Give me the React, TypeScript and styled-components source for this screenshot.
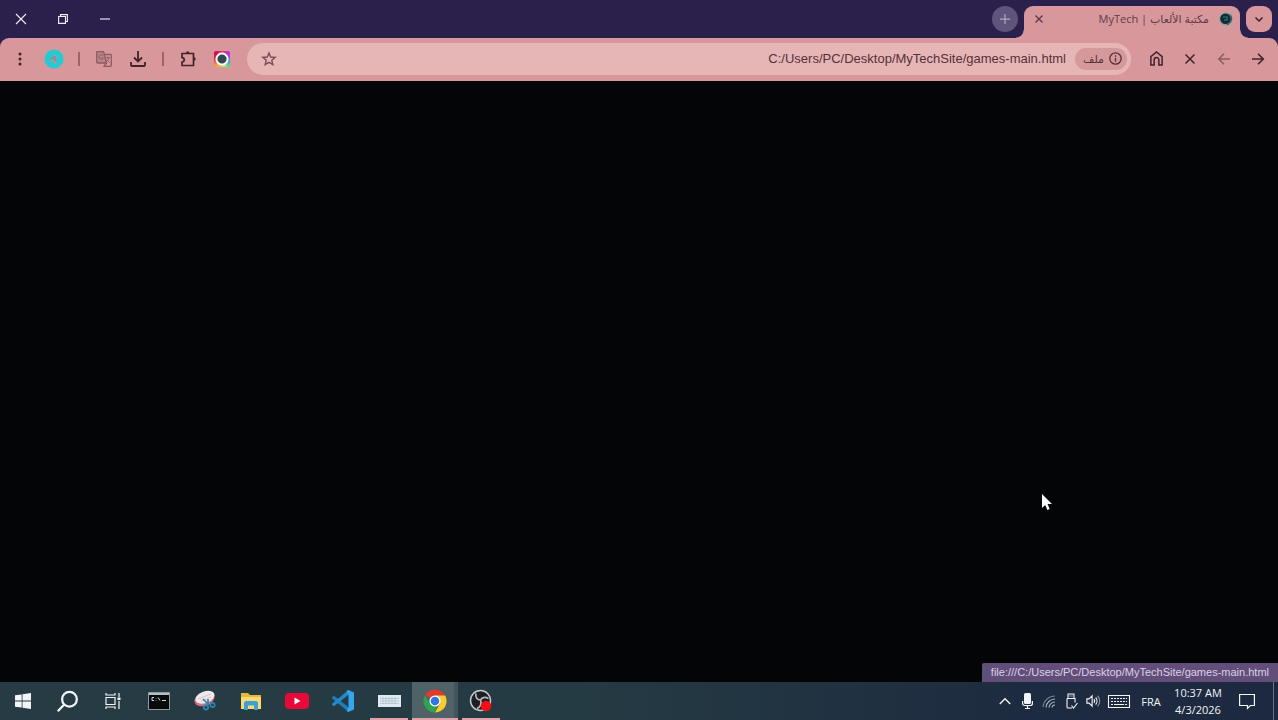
import React from "react";
import styled, { createGlobalStyle } from "styled-components";

const GlobalStyle = createGlobalStyle`
  *, *::before, *::after { box-sizing: border-box; }
  body { margin: 0; background: #030507; }
  button, input { font: inherit; color: inherit; margin: 0; padding: 0; border: 0; background: none; }
  svg { display: block; flex: none; overflow: visible; }
`;

const Desktop = styled.div`
  display: flex;
  flex-direction: column;
  min-height: 100vh;
  font-family: "Open Sans", "DejaVu Sans", sans-serif;
  font-size: 12px;
  overflow: hidden;
`;

const TitleBar = styled.header`
  display: flex;
  align-items: flex-start;
  height: 38px;
  background: #2b204c;
`;

const CaptionButton = styled.button`
  display: flex;
  align-items: center;
  justify-content: center;
  width: 42px;
  height: 38px;
  color: #f1edf8;
`;

const TabStrip = styled.div`
  display: flex;
  align-items: flex-start;
  margin-left: auto;
  padding: 6px 6px 0 0;
  gap: 6px;
`;

const NewTab = styled.button`
  display: flex;
  align-items: center;
  justify-content: center;
  width: 26px;
  height: 26px;
  border-radius: 50%;
  background: #60547b;
  color: #a9a5cc;
`;

const Tab = styled.div`
  position: relative;
  display: flex;
  align-items: center;
  width: 216px;
  height: 32px;
  padding: 0 7px 6px 9px;
  border-radius: 9px 9px 0 0;
  background: #d8979a;
  color: #5d3c4a;

  &::before,
  &::after {
    content: "";
    position: absolute;
    bottom: 0;
    width: 8px;
    height: 8px;
  }
  &::before {
    right: 100%;
    background: radial-gradient(circle at 0 0, transparent 7px, #d8979a 8px);
  }
  &::after {
    left: 100%;
    background: radial-gradient(circle at 100% 0, transparent 7px, #d8979a 8px);
  }
`;

const TabClose = styled.button`
  display: flex;
  align-items: center;
  justify-content: center;
  width: 12px;
  height: 16px;
`;

const TabTitle = styled.span`
  flex: 1;
  padding-right: 10px;
  font-size: 11px;
  line-height: 16px;
  white-space: nowrap;
`;

const TabSearch = styled(NewTab)`
  border-radius: 9px;
  background: #d8979a;
  color: #3a1f2a;
`;

const Toolbar = styled.nav`
  display: flex;
  align-items: center;
  height: 43px;
  padding: 0 3px 2px;
  border-radius: 9px 9px 0 0;
  background: #d8979a;
  color: #43232a;
`;

const ToolbarFrame = styled.div`
  background: #2b204c;
`;

const ToolButton = styled.button<{ $dim?: boolean }>`
  display: flex;
  align-items: center;
  justify-content: center;
  width: 34px;
  height: 34px;
  opacity: ${(p) => (p.$dim ? 0.5 : 1)};
`;

const Separator = styled.span`
  width: 2px;
  height: 14px;
  margin: 0 7px;
  background: #a0636c;
`;

const Omnibox = styled.form`
  display: flex;
  flex: 1;
  align-items: center;
  height: 32px;
  margin: 0 8px;
  padding: 0 4px 0 14px;
  border-radius: 16px;
  background: #e6b6b7;
`;

const Star = styled.button`
  width: 16px;
  height: 16px;
  color: #7a4a50;
`;

const Address = styled.input`
  flex: 1;
  min-width: 0;
  padding: 0 9px;
  outline: 0;
  color: #55303a;
  font-family: "Liberation Sans", sans-serif;
  font-size: 13px;
  line-height: 20px;
  text-align: right;
`;

const SchemeChip = styled.button`
  display: flex;
  align-items: center;
  justify-content: space-between;
  width: 52px;
  height: 22px;
  padding: 0 5px 0 8px;
  border-radius: 11px;
  background: #d5999b;
  color: #55303a;
  font-size: 11px;
  line-height: 16px;
`;

const Page = styled.main`
  position: relative;
  flex: 1;
  background: #030507;
`;

const Pointer = styled.svg`
  position: absolute;
  left: 1041px;
  top: 413px;
`;

const StatusBubble = styled.div`
  position: absolute;
  right: 0;
  bottom: 0;
  padding: 0 9px;
  height: 19px;
  border-top-left-radius: 2px;
  background: #614f79;
  color: #dcd0ea;
  font-family: "Liberation Sans", sans-serif;
  font-size: 11px;
  line-height: 19px;
  white-space: nowrap;
`;

const Taskbar = styled.footer`
  display: flex;
  height: 38px;
  background: linear-gradient(90deg, #263b43 0%, #253b43 45%, #1d2b40 80%, #1d2940 100%);
  color: #f2f5f7;
`;

const StartGroup = styled.div`
  display: flex;
  padding-right: 1px;
`;

const SystemButton = styled.button`
  display: flex;
  align-items: center;
  justify-content: center;
  width: 45px;
`;

const AppButton = styled.button<{ $active?: boolean; $running?: boolean }>`
  position: relative;
  display: flex;
  align-items: center;
  justify-content: center;
  width: 46px;
  background: ${(p) => (p.$active ? "#4f6268" : "transparent")};
  box-shadow: ${(p) => (p.$active ? "inset -4px 0 #43545a" : "none")};

  &::after {
    content: "";
    position: absolute;
    bottom: 0;
    left: ${(p) => (p.$active ? 0 : 4)}px;
    right: ${(p) => (p.$active ? 0 : 4)}px;
    height: 2px;
    background: ${(p) => (p.$running ? "#e5a1a9" : "transparent")};
  }
`;

const Tray = styled.div`
  display: flex;
  margin-left: auto;
`;

const TrayButton = styled.button<{ $w?: number }>`
  display: flex;
  align-items: center;
  justify-content: center;
  width: ${(p) => p.$w ?? 22}px;
  text-align: center;
  line-height: 17px;
  white-space: nowrap;
  font-size: 11px;
`;

const ShowDesktop = styled.button`
  width: 5px;
  margin-left: 7px;
  border-left: 1px solid #66728a;
`;

type LineProps = { size?: number; width?: number; children: React.ReactNode };

const Line = ({ size = 16, width = 1.6, children }: LineProps) => (
  <svg width={size} height={size} viewBox="0 0 16 16" fill="none" stroke="currentColor" strokeWidth={width} aria-hidden="true">
    {children}
  </svg>
);

const SiteIcon = () => (
  <svg width="14" height="14" viewBox="0 0 14 14" aria-hidden="true">
    <circle cx="7" cy="7" r="6.5" fill="#65a5a0" />
    <circle cx="6.5" cy="6.7" r="5.3" fill="#152c34" />
    <path d="M4 5h4v3H5" fill="none" stroke="#347b77" strokeWidth="1.2" />
    <path d="M11 2.3a6.5 6.5 0 0 1-3 10.5" fill="none" stroke="#303f47" strokeWidth=".8" />
  </svg>
);

const Avatar = () => (
  <svg width="20" height="20" viewBox="0 0 20 20" aria-hidden="true">
    <circle cx="10" cy="10" r="9.5" fill="#23cbd3" />
    <path d="M10 5l3 1.5v3L11.500 11l1.500 4h-3l-.5-3-3 2-.5-2 3-3z" fill="#8ea3b5" />
    <path d="M7 10l3-2M11 7v5" stroke="#c2636f" strokeWidth="1" />
  </svg>
);

const ColorWheel = styled.span`
  width: 16px;
  height: 16px;
  border-radius: 2px;
  background:
    radial-gradient(circle, #33484f 4px, #fff 5px, #fff 6px, transparent 7px),
    conic-gradient(#e83a5c, #c22ae0 45deg, #6a6cf0 90deg, #48d8a8 135deg, #b8e860 160deg, #f2a04c 225deg, #e8204c 270deg, #d00a58 315deg, #e83a5c);
`;

const Chrome = () => (
  <svg width="24" height="24" viewBox="0 0 24 24" aria-hidden="true">
    <path d="M12 12L2.040 6.250A11.500 11.500 0 0 1 21.960 6.250z" fill="#df3b2f" />
    <path d="M12 6.500h10.200A11.500 11.500 0 0 1 12 23.500l4.800-8.700z" fill="#f8cc2e" />
    <path d="M2.040 6.250L7.200 14.800 12 17.500l2.200-.3L12 23.500A11.500 11.500 0 0 1 2.040 6.250z" fill="#2fa24c" />
    <circle cx="12" cy="12" r="5.600" fill="#fff" />
    <circle cx="12" cy="12" r="4.300" fill="#2f78e4" />
  </svg>
);

const Obs = () => (
  <svg width="24" height="24" viewBox="0 0 24 24" aria-hidden="true">
    <circle cx="11.500" cy="11.500" r="10" fill="#1d1f24" stroke="#c5c8ca" strokeWidth="1.500" />
    <g fill="none" stroke="#b6babc" strokeWidth="1.700">
      <path d="M7 4.500c-1 4 1.500 6.500 4.500 6.500" />
      <path d="M19.500 9.500c-3.500-2-7-.8-8 1.500" />
      <path d="M8 19.500c3.500-1.500 5-5 3.500-8.500" />
    </g>
    <circle cx="17" cy="17" r="5.200" fill="#fa0d12" />
  </svg>
);

const Vscode = () => (
  <svg width="24" height="24" viewBox="0 0 24 24" aria-hidden="true">
    <path d="M1 8.300l2-1.600 14.500 11.500V23L1.200 9.500z" fill="#1b7fc0" />
    <path d="M1 15.700l2 1.600L17.500 5.800V1L1.200 14.500z" fill="#2489ca" />
    <path d="M17.200 1L23 3.600v16.800L17.200 23l-1.500-1 1.800-4V6l-1.800-4z" fill="#35a7ee" />
  </svg>
);

const Explorer = () => (
  <svg width="22" height="18" viewBox="0 0 22 18" aria-hidden="true">
    <path d="M1 1h7l2 2h11v14H1z" fill="#e6b93a" />
    <path d="M1 5h20v12H1z" fill="#fad873" />
    <path d="M4 18v-7.500l1.500-1.500h11l1.500 1.500V18h-4v-4.500H8V18z" fill="#3f9fd4" />
  </svg>
);

const Snip = () => (
  <svg width="24" height="22" viewBox="0 0 24 22" aria-hidden="true">
    <ellipse cx="11.500" cy="9" rx="10.500" ry="6.800" transform="rotate(-20 11.500 9)" fill="#d36f7f" />
    <ellipse cx="12" cy="7.300" rx="10" ry="5.800" transform="rotate(-20 12 7.300)" fill="#f0e8ea" />
    <path d="M5 9l13-5M8 11l10-4" stroke="#c5bcc3" strokeWidth=".8" />
    <g fill="none" stroke="#2d86b5" strokeWidth="1.700">
      <path d="M10 9l6 6M15 9v6" />
      <circle cx="13" cy="17.500" r="2.200" />
      <circle cx="19.500" cy="15" r="2.200" />
    </g>
  </svg>
);

const Terminal = () => (
  <svg width="22" height="18" viewBox="0 0 22 18" aria-hidden="true">
    <path d="M.5.5h21v17H.5z" fill="#080a0b" stroke="#929b9e" />
    <path d="M1 1h20v2H1z" fill="#b7bec1" />
    <path d="M6 5.500H4v3h2M8 6v.5M8 8v.5M10 5.500l2 3M14 8.500h4" fill="none" stroke="#d2d7d8" />
  </svg>
);

const KeyboardApp = () => (
  <svg width="23" height="12" viewBox="0 0 23 12" aria-hidden="true">
    <path d="M0 0h23v12H0z" fill="#dfe9f0" />
    <path d="M2 3.500h19M2 6h19M2 8.500h19M5 2v7M8 2v7M11 2v7M14 2v7M17 2v7" stroke="#aebfcd" strokeWidth=".7" />
  </svg>
);

const TaskView = () => (
  <svg width="16" height="16" viewBox="0 0 16 16" fill="none" stroke="currentColor" strokeWidth="1.200" aria-hidden="true">
    <path d="M1 4.500h9v7H1zM1 0v2h9V0M1 16v-2h9v2M14 0v4M14 8v8" />
    <path d="M12.500 4.500h3v2.500h-3z" fill="currentColor" stroke="none" />
  </svg>
);

export default function App() {
  return (
    <Desktop>
      <GlobalStyle />
      <TitleBar>
        <CaptionButton aria-label="Close window">
          <Line size={10} width={1.800}><path d="M0 0l16 16M16 0L0 16" /></Line>
        </CaptionButton>
        <CaptionButton aria-label="Restore window">
          <Line size={10} width={1.800}><path d="M1 4h11v11H1zM4 4V1h11v11h-3" /></Line>
        </CaptionButton>
        <CaptionButton aria-label="Minimize window">
          <Line size={10} width={1.800}><path d="M0 8h16" /></Line>
        </CaptionButton>
        <TabStrip>
          <NewTab aria-label="New tab">
            <Line size={10} width={2}><path d="M8 0v16M0 8h16" /></Line>
          </NewTab>
          <Tab>
            <TabClose aria-label="Close tab">
              <Line size={8} width={2.800}><path d="M1 1l14 14M15 1L1 15" /></Line>
            </TabClose>
            <TabTitle dir="rtl">مكتبة الألعاب | MyTech</TabTitle>
            <SiteIcon />
          </Tab>
          <TabSearch aria-label="Search tabs">
            <Line size={8} width={3}><path d="M1 5l7 7 7-7" /></Line>
          </TabSearch>
        </TabStrip>
      </TitleBar>

      <ToolbarFrame>
        <Toolbar>
          <ToolButton aria-label="Menu">
            <svg width="4" height="14" viewBox="0 0 4 14" fill="currentColor" aria-hidden="true">
              <circle cx="2" cy="2" r="1.500" /><circle cx="2" cy="7" r="1.500" /><circle cx="2" cy="12" r="1.500" />
            </svg>
          </ToolButton>
          <ToolButton aria-label="Profile"><Avatar /></ToolButton>
          <Separator />
          <ToolButton aria-label="Translate" $dim>
            <svg width="16" height="16" viewBox="0 0 16 16" fill="none" stroke="currentColor" strokeWidth="1.300" aria-hidden="true">
              <path d="M1 .7h6.500L10.500 12H1.700a1 1 0 0 1-1-1V1z" fill="currentColor" fillOpacity=".35" />
              <path d="M8.500 3.500h6a.8.8 0 0 1 .8.8v10a1 1 0 0 1-1 1H8L10.500 12" />
              <path d="M7 4.500a2.200 2.200 0 1 0 .3 2.500H5.500M9.500 6.700h4.500M11.700 5.500v1.200M13 6.700c-.5 2-1.500 3-3 4M10.500 8.500l3 3" strokeWidth="1" />
            </svg>
          </ToolButton>
          <ToolButton aria-label="Downloads">
            <Line width={1.800}><path d="M8 0v10M4 6.500l4 4 4-4M1 11v3a1 1 0 0 0 1 1h12a1 1 0 0 0 1-1v-3" /></Line>
          </ToolButton>
          <Separator />
          <ToolButton aria-label="Extensions">
            <Line width={1.700}>
              <path d="M2 2.500h11.500V14.500H2V11a2.200 2.200 0 0 0 0-4.400z" strokeLinejoin="round" />
              <path d="M6 2a1.700 1.700 0 0 1 3.400 0zM14 6.300a1.700 1.700 0 0 1 0 3.400z" fill="currentColor" stroke="none" />
            </Line>
          </ToolButton>
          <ToolButton aria-label="Color picker"><ColorWheel /></ToolButton>
          <Omnibox onSubmit={(e) => e.preventDefault()}>
            <Star type="button" aria-label="Bookmark this page">
              <Line width={1.400}><path d="M8 2l1.700 4 4.500.4-3.400 2.900 1 4.300L8 11.300l-3.800 2.300 1-4.300L1.800 6.400l4.500-.4z" /></Line>
            </Star>
            <Address aria-label="Address" defaultValue="C:/Users/PC/Desktop/MyTechSite/games-main.html" />
            <SchemeChip type="button">
              <span>ملف</span>
              <Line size={13} width={1.600}><circle cx="8" cy="8" r="7" /><path d="M8 7v5M8 4v1.700" /></Line>
            </SchemeChip>
          </Omnibox>
          <ToolButton aria-label="Home">
            <Line size={15} width={1.600}><path d="M2 6l6-5 6 5v9h-3.500V9.500a2.500 2.500 0 0 0-5 0V15H2z" /></Line>
          </ToolButton>
          <ToolButton aria-label="Stop">
            <Line size={12} width={2}><path d="M2 2l12 12M14 2L2 14" /></Line>
          </ToolButton>
          <ToolButton aria-label="Forward" $dim>
            <Line size={12} width={2}><path d="M16 8H1M8 1L1 8l7 7" /></Line>
          </ToolButton>
          <ToolButton aria-label="Back">
            <Line size={12} width={2.200}><path d="M0 8h15M8 1l7 7-7 7" /></Line>
          </ToolButton>
        </Toolbar>
      </ToolbarFrame>

      <Page>
        <Pointer width="11" height="17" viewBox="0 0 11 17" aria-hidden="true">
          <path d="M1 0v14l3.200-3 2.200 5 2.300-1-2.200-5H11z" fill="#fff" />
        </Pointer>
        <StatusBubble>file:///C:/Users/PC/Desktop/MyTechSite/games-main.html</StatusBubble>
      </Page>

      <Taskbar>
        <StartGroup>
          <SystemButton aria-label="Start">
            <svg width="16" height="16" viewBox="0 0 16 16" fill="currentColor" aria-hidden="true">
              <path d="M0 2.300l6.700-.9v6.200H0zM7.500 1.300L16 0v7.600H7.500zM0 8.400h6.700v6.200L0 13.700zM7.500 8.400H16V16l-8.500-1.200z" />
            </svg>
          </SystemButton>
          <SystemButton aria-label="Search">
            <Line size={21} width={1.700}><circle cx="9.500" cy="6.300" r="5.600" /><path d="M5.500 10.300L.6 15.400" /></Line>
          </SystemButton>
          <SystemButton aria-label="Task view"><TaskView /></SystemButton>
        </StartGroup>
        <AppButton aria-label="Command Prompt"><Terminal /></AppButton>
        <AppButton aria-label="Snipping Tool"><Snip /></AppButton>
        <AppButton aria-label="File Explorer"><Explorer /></AppButton>
        <AppButton aria-label="YouTube">
          <svg width="24" height="16" viewBox="0 0 24 16" aria-hidden="true">
            <rect width="24" height="16" rx="4" fill="#e90938" />
            <path d="M9.500 4.500v7l6-3.500z" fill="#fff" />
          </svg>
        </AppButton>
        <AppButton aria-label="Visual Studio Code"><Vscode /></AppButton>
        <AppButton aria-label="On-Screen Keyboard" $running><KeyboardApp /></AppButton>
        <AppButton aria-label="Google Chrome" $running $active><Chrome /></AppButton>
        <AppButton aria-label="OBS Studio" $running><Obs /></AppButton>
        <Tray>
          <TrayButton aria-label="Show hidden icons">
            <Line size={12} width={1.800}><path d="M1 12l7-7 7 7" /></Line>
          </TrayButton>
          <TrayButton aria-label="Microphone">
            <svg width="11" height="16" viewBox="0 0 11 16" fill="none" stroke="currentColor" strokeWidth="1.200" aria-hidden="true">
              <rect x="2" y="0" width="7" height="11" rx="1.500" fill="currentColor" stroke="none" />
              <path d="M.6 8v2.500a2 2 0 0 0 2 2h5.800a2 2 0 0 0 2-2V8M5.500 12.500V16M3 15.500h5" />
            </svg>
          </TrayButton>
          <TrayButton aria-label="Network">
            <svg width="14" height="14" viewBox="0 0 14 14" fill="none" stroke="#aab4be" strokeWidth="1.200" aria-hidden="true">
              <path d="M1 13A12 12 0 0 1 13 2" opacity=".6" />
              <path d="M4 13.500a9 9 0 0 1 9-8.500M7 13.500a6 6 0 0 1 6-5.500M10 13.500a3 3 0 0 1 3-2.500" />
            </svg>
          </TrayButton>
          <TrayButton aria-label="Safely remove hardware">
            <svg width="13" height="16" viewBox="0 0 13 16" fill="none" stroke="currentColor" strokeWidth="1.100" aria-hidden="true">
              <path d="M3 5V1h6v4M2 5.500h8v4M2 5.500V14a1 1 0 0 0 1 1h4M5 2.500v1M7 2.500v1" />
              <path d="M6.500 12.500l2 2.500L12.500 10" />
            </svg>
          </TrayButton>
          <TrayButton aria-label="Volume">
            <Line size={14} width={1.300}>
              <path d="M1 5.500h2.500L7 2v12l-3.500-3.500H1zM9 6a3 3 0 0 1 0 4M11 4a6 6 0 0 1 0 8" />
              <path d="M13.300 2a9 9 0 0 1 0 12" opacity=".5" />
            </Line>
          </TrayButton>
          <TrayButton aria-label="Touch keyboard" $w={30}>
            <svg width="22" height="13" viewBox="0 0 22 13" fill="none" stroke="currentColor" aria-hidden="true">
              <path d="M.5.5h21v12H.5z" strokeWidth="1.100" />
              <path d="M3 3.500h16M3 6.500h16" strokeDasharray="2 1" />
              <path d="M3 9.500h2M6 9.500h10M17 9.500h2" />
            </svg>
          </TrayButton>
          <TrayButton $w={34}>FRA</TrayButton>
          <TrayButton $w={60}>
            <time dateTime="2026-04-03T10:37">10:37 AM<br />4/3/2026</time>
          </TrayButton>
          <TrayButton aria-label="Notifications" $w={38}>
            <Line width={1.200}><path d="M.6 1.500h14.800v11h-4L8.500 15.400v-2.900H.6z" /></Line>
          </TrayButton>
          <ShowDesktop aria-label="Show desktop" />
        </Tray>
      </Taskbar>
    </Desktop>
  );
}
